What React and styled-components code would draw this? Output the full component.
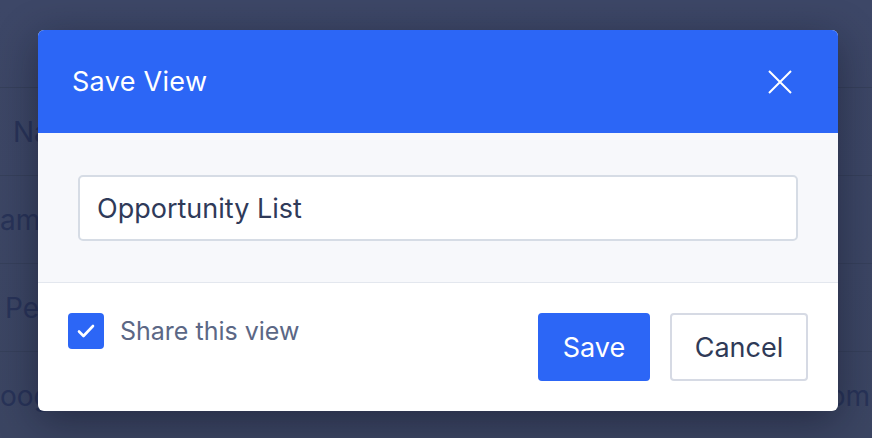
import React from "react";
import styled, { createGlobalStyle } from "styled-components";

const Global = createGlobalStyle`
  html, body { margin: 0; padding: 0; }
  body {
    width: 872px; height: 438px; overflow: hidden;
    background: #3c4663;
    font-family: Inter, "Noto Sans", "Liberation Sans", sans-serif;
  }
`;

const Page = styled.div`
  position: relative;
  width: 872px;
  height: 438px;
  overflow: hidden;
  background: linear-gradient(180deg, #3d4767 0%, #3b4562 100%);
`;

const Table = styled.div`
  display: flex;
  flex-direction: column;
`;

const Row = styled.div`
  height: 87px;
  display: flex;
  align-items: center;
  justify-content: space-between;
  border-bottom: 1px solid #36405b;
  font-size: 28px;
  color: #283358;
  white-space: nowrap;
`;

const Cell = styled.span`
  margin-left: ${(p) => p.$offset}px;
`;

const EndCell = styled.span`
  margin-right: 2px;
`;

const Modal = styled.div`
  position: absolute;
  left: 38px;
  top: 30px;
  width: 800px;
  border-radius: 6px;
  overflow: hidden;
  background: #fff;
  box-shadow: 0 10px 40px rgba(10, 14, 30, 0.45);
`;

const Header = styled.div`
  height: 103px;
  background: #2c66f6;
  display: flex;
  align-items: center;
  justify-content: space-between;
  padding: 0 46px 0 34px;
  box-sizing: border-box;
`;

const Title = styled.h2`
  margin: 0;
  font-size: 27px;
  font-weight: 400;
  color: #fff;
  letter-spacing: 0.3px;
`;

const Close = styled.button`
  border: 0;
  background: none;
  padding: 0;
  width: 24px;
  height: 24px;
  display: flex;
  cursor: pointer;
`;

const Body = styled.div`
  background: #f7f8fb;
  padding: 42px 40px 41px;
  border-bottom: 1px solid #e3e7ee;
`;

const Input = styled.input`
  display: block;
  box-sizing: border-box;
  width: 100%;
  height: 66px;
  border: 2px solid #d6dce5;
  border-radius: 5px;
  background: #fff;
  padding: 0 17px;
  font-family: inherit;
  font-size: 27px;
  color: #2f3a59;
  outline: none;
`;

const Footer = styled.div`
  display: flex;
  align-items: center;
  justify-content: space-between;
  padding: 30px 30px 30px;
`;

const CheckLabel = styled.label`
  display: flex;
  align-items: center;
  gap: 16px;
  align-self: flex-start;
  font-size: 25px;
  color: #5b6785;
`;

const Box = styled.span`
  width: 36px;
  height: 36px;
  border-radius: 4px;
  background: #2c66f6;
  display: flex;
  align-items: center;
  justify-content: center;
`;

const Buttons = styled.div`
  display: flex;
  gap: 20px;
`;

const Button = styled.button`
  height: 68px;
  box-sizing: border-box;
  width: ${(p) => (p.$primary ? 112 : 138)}px;
  padding: 0;
  border-radius: 4px;
  font-family: inherit;
  font-size: 27px;
  font-weight: 400;
  border: 2px solid ${(p) => (p.$primary ? "#2c66f6" : "#d6dae4")};
  background: ${(p) => (p.$primary ? "#2c66f6" : "#fff")};
  color: ${(p) => (p.$primary ? "#fff" : "#2f3a57")};
`;

export default function App() {
  return (
    <Page>
      <Global />
      <Table>
        <Row />
        <Row><Cell $offset={13}>Name</Cell></Row>
        <Row><Cell $offset={0}>am</Cell></Row>
        <Row><Cell $offset={5}>People</Cell></Row>
        <Row>
          <Cell $offset={0}>oogle</Cell>
          <EndCell>om</EndCell>
        </Row>
      </Table>
      <Modal>
        <Header>
          <Title>Save View</Title>
          <Close aria-label="Close">
            <svg width="24" height="24" viewBox="0 0 24 24">
              <path d="M1 1L23 23M23 1L1 23" stroke="#fff" strokeWidth="2" />
            </svg>
          </Close>
        </Header>
        <Body>
          <Input defaultValue="Opportunity List" />
        </Body>
        <Footer>
          <CheckLabel>
            <Box>
              <svg width="18" height="14" viewBox="0 0 18 14">
                <path d="M2 7.5L6.5 12L16 2" fill="none" stroke="#fff" strokeWidth="2.6" strokeLinecap="round" strokeLinejoin="round" />
              </svg>
            </Box>
            Share this view
          </CheckLabel>
          <Buttons>
            <Button $primary>Save</Button>
            <Button>Cancel</Button>
          </Buttons>
        </Footer>
      </Modal>
    </Page>
  );
}
